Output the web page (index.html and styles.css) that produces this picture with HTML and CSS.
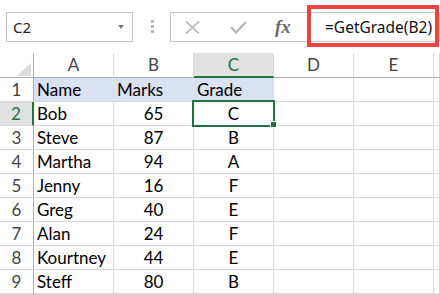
FILE: index.html
```html
<!DOCTYPE html>
<html lang="en">
<head>
    <meta charset="UTF-8">
    <title>GetGrade</title>
    <link rel="stylesheet" href="styles.css">
</head>
<body>
    <div class="toolbar">
        <div class="name-box">
            <span>C2</span>
            <span class="caret"></span>
        </div>
        <div class="grip"><i></i><i></i><i></i></div>
        <div class="fx-buttons">
            <svg class="btn-cancel" width="15" height="13" viewBox="0 0 15 13">
                <path d="M1 0.5 L14 12.5 M14 0.5 L1 12.5" stroke="#b4b4b4" stroke-width="1.6" fill="none"/>
            </svg>
            <svg class="btn-enter" width="17" height="13" viewBox="0 0 17 13">
                <path d="M1 6 L6 11.5 L16 1" stroke="#b4b4b4" stroke-width="2.2" fill="none"/>
            </svg>
            <span class="btn-fx">fx</span>
        </div>
        <div class="formula">=GetGrade(B2)</div>
    </div>

    <div class="grid">
        <div class="hd corner"><div class="tri"></div></div>
        <div class="hd col">A</div>
        <div class="hd col">B</div>
        <div class="hd col active">C</div>
        <div class="hd col">D</div>
        <div class="hd col">E</div>
        <div class="hd col"></div>

        <div class="hd row">1</div>
        <div class="cell title">Name</div>
        <div class="cell title">Marks</div>
        <div class="cell title">Grade</div>
        <div class="cell"></div><div class="cell"></div><div class="cell"></div>

        <div class="hd row active">2</div>
        <div class="cell">Bob</div>
        <div class="cell num">65</div>
        <div class="cell num selected">C</div>
        <div class="cell"></div><div class="cell"></div><div class="cell"></div>

        <div class="hd row">3</div>
        <div class="cell">Steve</div>
        <div class="cell num">87</div>
        <div class="cell num">B</div>
        <div class="cell"></div><div class="cell"></div><div class="cell"></div>

        <div class="hd row">4</div>
        <div class="cell">Martha</div>
        <div class="cell num">94</div>
        <div class="cell num">A</div>
        <div class="cell"></div><div class="cell"></div><div class="cell"></div>

        <div class="hd row">5</div>
        <div class="cell">Jenny</div>
        <div class="cell num">16</div>
        <div class="cell num">F</div>
        <div class="cell"></div><div class="cell"></div><div class="cell"></div>

        <div class="hd row">6</div>
        <div class="cell">Greg</div>
        <div class="cell num">40</div>
        <div class="cell num">E</div>
        <div class="cell"></div><div class="cell"></div><div class="cell"></div>

        <div class="hd row">7</div>
        <div class="cell">Alan</div>
        <div class="cell num">24</div>
        <div class="cell num">F</div>
        <div class="cell"></div><div class="cell"></div><div class="cell"></div>

        <div class="hd row">8</div>
        <div class="cell">Kourtney</div>
        <div class="cell num">44</div>
        <div class="cell num">E</div>
        <div class="cell"></div><div class="cell"></div><div class="cell"></div>

        <div class="hd row">9</div>
        <div class="cell">Steff</div>
        <div class="cell num">80</div>
        <div class="cell num">B</div>
        <div class="cell"></div><div class="cell"></div><div class="cell"></div>

        <div class="hd row"></div>
        <div class="cell"></div><div class="cell"></div><div class="cell"></div>
        <div class="cell"></div><div class="cell"></div><div class="cell"></div>
    </div>
</body>
</html>
```

FILE: styles.css
```css
body {
    margin: 0;
    width: 440px;
    height: 295px;
    overflow: hidden;
    background: #fff;
    font-family: Lato, "Liberation Sans", sans-serif;
}
.toolbar {
    display: flex;
    align-items: flex-start;
    height: 53px;
    padding: 12px 0 0 6px;
    box-sizing: border-box;
}
.name-box {
    width: 127px;
    height: 30px;
    box-sizing: border-box;
    border: 1px solid #c6c6c6;
    display: flex;
    align-items: center;
    justify-content: space-between;
    padding: 0 8px 0 6px;
    font-family: "Noto Sans", sans-serif;
    font-size: 15px;
    color: #222;
}
.caret {
    width: 0;
    height: 0;
    border-left: 3.5px solid transparent;
    border-right: 3.5px solid transparent;
    border-top: 4px solid #777;
}
.grip {
    display: flex;
    flex-direction: column;
    gap: 2px;
    margin: 8px 0 0 18px;
}
.grip i {
    width: 3px;
    height: 3px;
    background: #b8b8b8;
}
.fx-buttons {
    margin-left: 16px;
    width: 137px;
    height: 30px;
    box-sizing: border-box;
    border: 1px solid #c6c6c6;
    border-right: none;
    display: flex;
    align-items: center;
    padding-left: 14px;
}
.btn-enter {
    margin-left: 30px;
}
.btn-fx {
    margin-left: 28px;
    font-family: "Liberation Serif", serif;
    font-style: italic;
    font-weight: bold;
    font-size: 19px;
    color: #6a6a6a;
}
.formula {
    position: relative;
    flex: 1;
    height: 30px;
    box-sizing: border-box;
    border: 1px solid #c6c6c6;
    padding-left: 17px;
    font-family: "Noto Sans", sans-serif;
    font-size: 15.5px;
    line-height: 28px;
    color: #111;
    white-space: nowrap;
}
.formula::after {
    content: "";
    position: absolute;
    left: -1px;
    top: -8px;
    width: 132px;
    height: 42px;
    box-sizing: border-box;
    border: 4px solid #ef4343;
}
.grid {
    display: grid;
    grid-template-columns: 34px repeat(5, 80px) 1fr;
    grid-template-rows: 25px repeat(9, 24px) 1px;
    font-size: 17px;
    line-height: 23px;
}
.hd {
    box-sizing: border-box;
    border-right: 1px solid #d8d8d8;
    border-bottom: 1px solid #d8d8d8;
    text-align: center;
    color: #444;
}
.hd.col {
    border-bottom-color: #ababab;
}
.hd.row {
    border-right-color: #b0b0b0;
}
.hd.active {
    background: #e1e1e1;
    color: #217346;
}
.hd.col.active {
    border-bottom: 2px solid #217346;
}
.hd.row.active {
    border-right: 2px solid #217346;
}
.corner {
    display: flex;
    align-items: flex-end;
    justify-content: flex-end;
    border-bottom-color: #ababab;
    border-right-color: #b0b0b0;
    padding: 0 2px 1px 0;
}
.tri {
    width: 14px;
    height: 13px;
    background: #dcdcdc;
    clip-path: polygon(100% 0, 100% 100%, 0 100%);
}
.cell {
    box-sizing: border-box;
    border-right: 1px solid #d8d8d8;
    border-bottom: 1px solid #d8d8d8;
    padding-left: 3px;
    color: #000;
    white-space: nowrap;
    overflow: hidden;
}
.cell.title {
    background: #d9e1f2;
    border-right-color: #d9e1f2;
}
.cell.num {
    text-align: center;
    padding-left: 0;
}
.selected {
    position: relative;
    overflow: visible;
}
.selected::before {
    content: "";
    position: absolute;
    left: -2px;
    top: -2px;
    width: 83px;
    height: 27px;
    box-sizing: border-box;
    border: 2px solid #217346;
}
.selected::after {
    content: "";
    position: absolute;
    left: 76px;
    top: 19px;
    width: 5px;
    height: 5px;
    background: #217346;
    border: 1px solid #fff;
}
```
